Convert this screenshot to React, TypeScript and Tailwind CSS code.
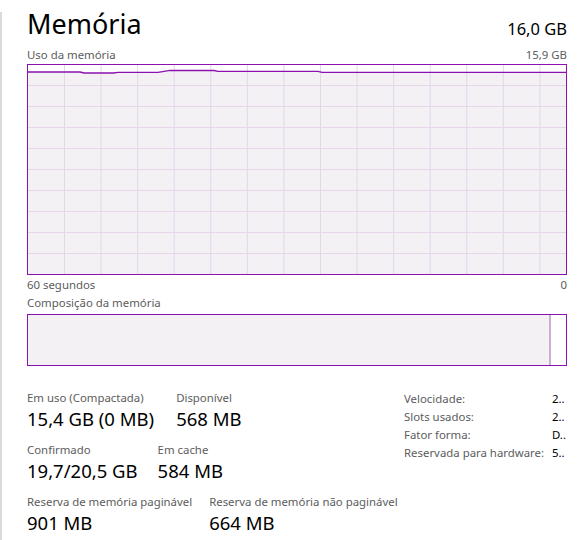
import React from 'react';

const FONT = { fontFamily: '"Noto Sans", "Open Sans", Arial, sans-serif' };

const usageLine: [number, number][] = [
  [0, 7], [52, 7], [56, 8], [85, 8], [90, 7.3], [130, 7.3], [142, 5.3],
  [186, 5.5], [190, 6.3], [290, 6.3], [294, 7.3], [538, 7.3],
];

const MemoryGraph: React.FC = () => {
  const w = 538;
  const h = 209;
  const cols = Array.from({ length: 14 }, (_, k) => 36.5 + k * 36.57);
  const rows = Array.from({ length: 9 }, (_, k) => 20 + k * 21);
  const pts = usageLine.map(([x, y]) => `${x},${y}`).join(' ');
  const area = `0,${h} ${pts} ${w},${h}`;
  return (
    <div className="border border-[#8b12ae] h-[211px] w-[540px] bg-white">
      <svg width={w} height={h} className="block">
        <polygon points={area} fill="#f3f1f4" />
        {cols.map((x) => (
          <line key={`c${x}`} x1={x} x2={x} y1={0} y2={h} stroke="#e6d5eb" strokeWidth={1} />
        ))}
        {rows.map((y) => (
          <line key={`r${y}`} x1={0} x2={w} y1={y + 0.5} y2={y + 0.5} stroke="#e6d5eb" strokeWidth={1} />
        ))}
        <polyline points={pts} fill="none" stroke="#8b12ae" strokeWidth={1.3} />
      </svg>
    </div>
  );
};

const Stat: React.FC<{ label: string; value: string }> = ({ label, value }) => (
  <div className="flex flex-col">
    <span className="text-[11.4px] leading-[16px] text-[#5c5c5c] whitespace-nowrap">{label}</span>
    <span className="text-[18.5px] leading-[26px] text-black whitespace-nowrap">{value}</span>
  </div>
);

const details = [
  { label: 'Velocidade:', value: '2..' },
  { label: 'Slots usados:', value: '2..' },
  { label: 'Fator forma:', value: 'D..' },
  { label: 'Reservada para hardware:', value: '5..' },
];

export default function App() {
  return (
    <div className="w-[582px] h-[540px] bg-white flex overflow-hidden" style={FONT}>
      <div className="w-[2px] mt-3 bg-[#dadada] shrink-0" />
      <div className="pl-[25px] w-[565px] flex flex-col">
        <div className="flex items-end justify-between w-[540px] h-[42px]">
          <span className="text-[27px] leading-[36px] text-black">Memória</span>
          <span className="text-[16.5px] leading-[24px] text-black mb-[1px]">16,0 GB</span>
        </div>
        <div className="flex justify-between w-[540px] h-[22px] items-end pb-[1px] text-[11.4px] leading-[16px] text-[#5c5c5c]">
          <span>Uso da memória</span>
          <span>15,9 GB</span>
        </div>
        <MemoryGraph />
        <div className="flex justify-between w-[540px] h-[20px] items-center text-[11.4px] text-[#5c5c5c]">
          <span>60 segundos</span>
          <span>0</span>
        </div>
        <div className="h-[19px] leading-[16px] text-[11.4px] text-[#5c5c5c]">Composição da memória</div>
        <div className="border border-[#8b12ae] h-[52px] w-[540px] flex bg-white">
          <div className="w-[521px] bg-[#f3f1f4]" />
          <div className="w-[2px] bg-[#c9add7]" />
          <div className="flex-1" />
        </div>
        <div className="flex mt-[24px] w-[540px]">
          <div className="flex flex-col gap-[10px] w-[377px]">
            <div className="flex gap-[22px]">
              <Stat label="Em uso (Compactada)" value="15,4 GB (0 MB)" />
              <Stat label="Disponível" value="568 MB" />
            </div>
            <div className="flex gap-[20px]">
              <Stat label="Confirmado" value="19,7/20,5 GB" />
              <Stat label="Em cache" value="584 MB" />
            </div>
            <div className="flex gap-[17px]">
              <Stat label="Reserva de memória paginável" value="901 MB" />
              <Stat label="Reserva de memória não paginável" value="664 MB" />
            </div>
          </div>
          <div className="grid grid-cols-[148px_auto] auto-rows-[18px] text-[11.4px] leading-[18px]">
            {details.map((d) => (
              <React.Fragment key={d.label}>
                <span className="text-[#5c5c5c] whitespace-nowrap">{d.label}</span>
                <span className="text-black">{d.value}</span>
              </React.Fragment>
            ))}
          </div>
        </div>
      </div>
    </div>
  );
}
